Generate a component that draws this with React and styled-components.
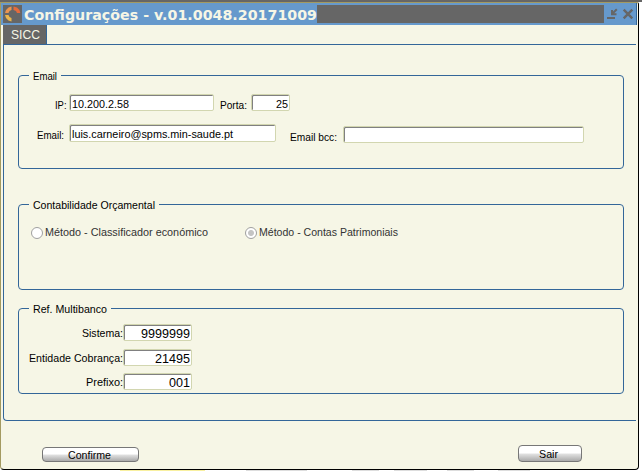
import React from 'react';
import styled, { createGlobalStyle } from 'styled-components';

const Global = createGlobalStyle`
  * { box-sizing: border-box; }
  html, body { margin: 0; padding: 0; overflow: hidden; background: #fff; }
  body { font-family: "Liberation Sans", Arial, sans-serif; font-size: 11px; color: #000; }
`;

const Desktop = styled.div`
  width: 642px;
  height: 471px;
  background: #fff;
  border-top: 2px solid #666;
`;

const Window = styled.main`
  width: 639px;
  height: 468px;
  display: flex;
  flex-direction: column;
  background: #f6f6e6;
  border-style: solid;
  border-width: 1px;
  border-color: #a39a61 #000 #000 #a39a61;
  border-radius: 0 2px 4px 4px;
`;

const BottomStrip = styled.div`
  height: 1px;
  background: linear-gradient(
    90deg,
    #fff 120px, #f8f0a0 120px 205px, #fff 205px 246px,
    #ddd 246px 307px, #fff 307px 352px, #ddd 352px 379px, #fff 379px 394px,
    #ddd 394px 427px, #fff 427px 447px, #ddd 447px 474px, #fff 474px 498px,
    #ddd 498px 530px, #fff 530px
  );
`;

const TitleBar = styled.header`
  height: 22px;
  flex: none;
  display: flex;
  align-items: center;
  padding: 2px 0 2px 2px;
  margin-right: 1px;
  background: #6699cc;
  border-right: 1px solid #336699;
`;

const AppIcon = styled.svg`
  width: 19px;
  height: 18px;
  flex: none;
  background: #666;
`;

const Title = styled.h1`
  width: 295px;
  height: 18px;
  flex: none;
  margin: 0;
  padding-left: 2px;
  white-space: nowrap;
`;

const TitleText = styled.svg`
  display: block;
  width: 293px;
  height: 18px;
  overflow: visible;
  font: bold 14.5px "DejaVu Sans", Verdana, sans-serif;
  fill: #f6f6e6;
`;

const TitleFill = styled.div`
  width: 287px;
  height: 18px;
  flex: none;
  background: #666;
`;

const WindowControls = styled.svg`
  width: 32px;
  height: 18px;
  flex: none;
`;

const Tab = styled.div`
  width: 44px;
  height: 19px;
  flex: none;
  margin-left: 2px;
  padding-left: 8px;
  background: #666;
  border-right: 1px solid #336699;
`;

const TabPage = styled.section`
  width: 633px;
  height: 377px;
  flex: none;
  margin-left: 2px;
  padding: 30px 0 0 14px;
  border: 1px solid #336699;
  border-right: none;
  border-radius: 0 0 0 4px;
`;

const Group = styled.fieldset`
  position: relative;
  width: 606px;
  height: ${(p) => p.$height}px;
  margin: 0 0 ${(p) => p.$gap || 0}px;
  padding: ${(p) => p.$top}px 0 0;
  border: 1px solid #336699;
  border-radius: 4px;
`;

const Caption = styled.legend`
  position: absolute;
  top: -7px;
  left: 10px;
  padding: 0 4px;
  background: #f6f6e6;
`;

const Text = styled.svg`
  display: block;
  flex: none;
  width: ${(p) => p.$width}px;
  height: 14px;
  overflow: visible;
  font-family: "Liberation Sans", Arial, sans-serif;
  font-size: ${(p) => p.$size || 11}px;
  fill: ${(p) => p.$color || '#000'};
`;

const Row = styled.div`
  display: flex;
  align-items: flex-start;
  height: ${(p) => p.$height}px;
  padding-left: ${(p) => p.$indent || 0}px;
`;

const Label = styled.label`
  flex: none;
  width: ${(p) => p.$width}px;
  padding-top: ${(p) => p.$top ?? 2}px;
  padding-right: ${(p) => p.$right || 0}px;
  display: flex;
  justify-content: flex-end;
`;

const Field = styled.div`
  flex: none;
  width: ${(p) => p.$width}px;
  height: ${(p) => p.$height || 17}px;
  margin-top: ${(p) => p.$top || 0}px;
  padding: 0 1px 0 2px;
  display: flex;
  justify-content: ${(p) => (p.$right ? 'flex-end' : 'flex-start')};
  align-items: flex-start;
  background: #fff;
  border: 1px solid #d2d6b0;
  border-radius: 2px;
  box-shadow: inset 1px 1px 0 #808080;
`;

const Radio = styled.span`
  flex: none;
  width: 12px;
  height: 12px;
  margin: 2px 2px 0 0;
  border: 1.5px solid #a0a0a0;
  border-radius: 50%;
  background: ${(p) =>
    p.$on ? 'radial-gradient(circle, #c4c4c4 0 2.5px, #fff 3.5px)' : '#fff'};
`;

const Option = styled.div`
  display: flex;
  width: ${(p) => p.$width}px;
`;

const Actions = styled.footer`
  display: flex;
  justify-content: space-between;
  align-items: flex-start;
  padding: 24px 56px 0 41px;
`;

const Button = styled.button`
  width: ${(p) => p.$width}px;
  height: ${(p) => p.$height}px;
  margin-top: ${(p) => p.$top || 0}px;
  padding: 0 3px 0 0;
  display: flex;
  align-items: center;
  justify-content: center;
  border: 1px solid #777;
  border-radius: 4px;
  background: linear-gradient(#fff 0 48%, #e2e2e2 52%, #aaa 100%);
`;

function Line({ children, width, size, color, y = 11 }) {
  return (
    <Text $width={width} $size={size} $color={color}>
      <text x="0" y={y} textLength={width} lengthAdjust="spacingAndGlyphs">{children}</text>
    </Text>
  );
}

const references = [
  { label: 'Sistema:', labelWidth: 41, value: '9999999', valueWidth: 49, height: 25 },
  { label: 'Entidade Cobrança:', labelWidth: 94, value: '21495', valueWidth: 35, height: 24 },
  { label: 'Prefixo:', labelWidth: 37, value: '001', valueWidth: 21, height: 20 },
];

export default function App() {
  return (
    <>
      <Global />
      <Desktop>
        <Window>
          <TitleBar>
            <AppIcon viewBox="0 0 19 18">
              <path d="M2 8L3 5L5.5 2.5L8.5 1.5V5L6.5 6L5.5 8Z" fill="#ea9550" />
              <path d="M10.5 1.5L14 2.5L16.5 5L17.3 8H14L13 6L10.5 5Z" fill="#e56b3c" />
              <path d="M2 10H5.5L6.5 12L8.5 13V16.5L5.5 15.5L3 13Z" fill="#eab54c" />
            </AppIcon>
            <Title>
              <TitleText>
                <text x="0" y="15" textLength="293" lengthAdjust="spacingAndGlyphs">Configurações - v.01.0048.20171009</text>
              </TitleText>
            </Title>
            <TitleFill />
            <WindowControls viewBox="0 0 32 18" fill="none" stroke="#666">
              <path d="M3 13h8M12.8 4.2L8.5 8.5M8 5v4.2H12.5" strokeWidth="2" />
              <path d="M19.7 4.7l8.6 8.6M28.3 4.7l-8.6 8.6" strokeWidth="2.4" />
            </WindowControls>
          </TitleBar>
          <Tab><Line width={29} size={12} color="#f6f6e6" y={14}>SICC</Line></Tab>
          <TabPage>
            <Group $height={94} $gap={35} $top={18}>
              <Caption><Line width={24}>Email</Line></Caption>
              <Row $height={30}>
                <Label $width={50} $top={4} $right={3}><Line width={11.5}>IP:</Line></Label>
                <Field $width={145}><Line width={57} y={13}>10.200.2.58</Line></Field>
                <Label $width={37} $top={4} $right={4}><Line width={27}>Porta:</Line></Label>
                <Field $width={39} $right><Line width={12} y={13}>25</Line></Field>
              </Row>
              <Row $height={24}>
                <Label $width={50} $top={4} $right={5.5}><Line width={27}>Email:</Line></Label>
                <Field $width={207} $height={18}><Line width={161} y={13}>luis.carneiro@spms.min-saude.pt</Line></Field>
                <Label $width={67} $top={6} $right={6}><Line width={47}>Email bcc:</Line></Label>
                <Field $width={241} $top={2} />
              </Row>
            </Group>
            <Group $height={86} $gap={18} $top={20}>
              <Caption><Line width={122}>Contabilidade Orçamental</Line></Caption>
              <Row $height={20} $indent={11.5}>
                <Option $width={214}>
                  <Radio />
                  <Line width={163} color="#333">Método - Classificador económico</Line>
                </Option>
                <Option>
                  <Radio $on />
                  <Line width={139} color="#333">Método - Contas Patrimoniais</Line>
                </Option>
              </Row>
            </Group>
            <Group $height={86} $top={15}>
              <Caption><Line width={74}>Ref. Multibanco</Line></Caption>
              {references.map((r) => (
                <Row key={r.label} $height={r.height}>
                  <Label $width={104}><Line width={r.labelWidth}>{r.label}</Line></Label>
                  <Field $width={69} $right><Line width={r.valueWidth} size={13} y={13}>{r.value}</Line></Field>
                </Row>
              ))}
            </Group>
          </TabPage>
          <Actions>
            <Button $width={97} $height={15} $top={2}><Line width={43}>Confirme</Line></Button>
            <Button $width={64} $height={17}><Line width={19}>Sair</Line></Button>
          </Actions>
        </Window>
        <BottomStrip />
      </Desktop>
    </>
  );
}
